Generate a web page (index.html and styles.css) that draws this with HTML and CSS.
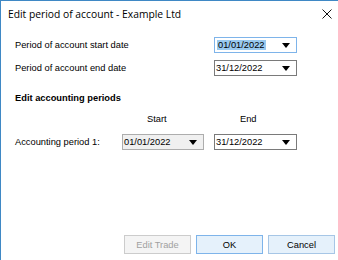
FILE: index.html
```html
<!DOCTYPE html>
<html>
<head>
<meta charset="utf-8">
<link rel="stylesheet" href="styles.css">
</head>
<body>
<div class="window">
  <div class="titlebar">
    <span class="title">Edit period of account - Example Ltd</span>
    <svg class="close" width="10" height="10" viewBox="0 0 10 10"><path d="M0.5 0.5 L9.5 9.5 M9.5 0.5 L0.5 9.5" stroke="#111" stroke-width="1"/></svg>
  </div>
  <div class="content">
    <div class="row row1">
      <span class="label wide">Period of account start date</span>
      <div class="combo focused"><span class="sel">01/01/2022</span><span class="arrow"></span></div>
    </div>
    <div class="row row2">
      <span class="label wide">Period of account end date</span>
      <div class="combo"><span>31/12/2022</span><span class="arrow"></span></div>
    </div>
    <div class="heading">Edit accounting periods</div>
    <div class="colheads">
      <span class="colhead start">Start</span>
      <span class="colhead end">End</span>
    </div>
    <div class="row row4">
      <span class="label narrow">Accounting period 1:</span>
      <div class="combo disabled"><span>01/01/2022</span><span class="arrow"></span></div>
      <div class="combo"><span>31/12/2022</span><span class="arrow"></span></div>
    </div>
  </div>
  <div class="buttons">
    <button class="btn off">Edit Trade</button>
    <button class="btn ok">OK</button>
    <button class="btn">Cancel</button>
  </div>
</div>
</body>
</html>
```
FILE: styles.css
```css
* { box-sizing: border-box; }
html, body { margin: 0; padding: 0; background: #fff; }
.window {
  width: 338px; height: 260px;
  border-top: 1px solid #3f88c5;
  border-left: 1px solid #3f88c5;
  background: #fff;
  display: flex; flex-direction: column;
  font-family: "Liberation Sans", Arial, sans-serif;
  font-size: 9.3px; color: #000;
}
.titlebar {
  height: 25px;
  display: flex; align-items: center; justify-content: space-between;
  padding: 0 6px 0 7px;
}
.title { font-family: "Open Sans", "Noto Sans", sans-serif; font-size: 10.3px; color: #000; }
.content { padding-left: 14px; flex: 1; }
.row { display: flex; align-items: center; height: 16px; }
.row1 { margin-top: 11px; }
.row2 { margin-top: 7px; }
.label { display: inline-block; }
.label.wide { width: 199px; }
.label.narrow { width: 107px; }
.combo {
  width: 83px; height: 16px;
  border: 1px solid #7a7a7a;
  background: #fff;
  display: flex; align-items: center; justify-content: space-between;
  padding: 0 6px 0 1px;
}
.combo.focused { border-color: #7eb4ea; }
.combo.disabled { width: 82px; background: #f0f0f0; border-color: #adadad; margin-right: 10px; }
.sel { background: #99c9ef; padding: 0 1px; margin-left: 1px; }
.arrow {
  width: 0; height: 0;
  border-left: 4.5px solid transparent;
  border-right: 4.5px solid transparent;
  border-top: 5px solid #000;
}
.heading { font-weight: bold; margin-top: 15px; height: 14px; line-height: 14px; }
.colheads { position: relative; height: 14px; margin-top: 7px; }
.colhead { position: absolute; top: 0; line-height: 14px; }
.colhead.start { left: 132px; }
.colhead.end { left: 225px; }
.row4 { margin-top: 8px; }
.buttons {
  display: flex; justify-content: flex-end; gap: 5px;
  padding: 0 3px 6px 0;
}
.btn {
  width: 67px; height: 19px;
  font-family: "Liberation Sans", Arial, sans-serif; font-size: 9.3px;
  background: #e5f1fb; border: 1px solid #a6c6e6; color: #000;
  padding: 0; border-radius: 0;
}
.btn.ok { border-color: #7eb4ea; }
.btn.off { background: #f4f4f4; border-color: #cccccc; color: #a0a0a0; }
```
